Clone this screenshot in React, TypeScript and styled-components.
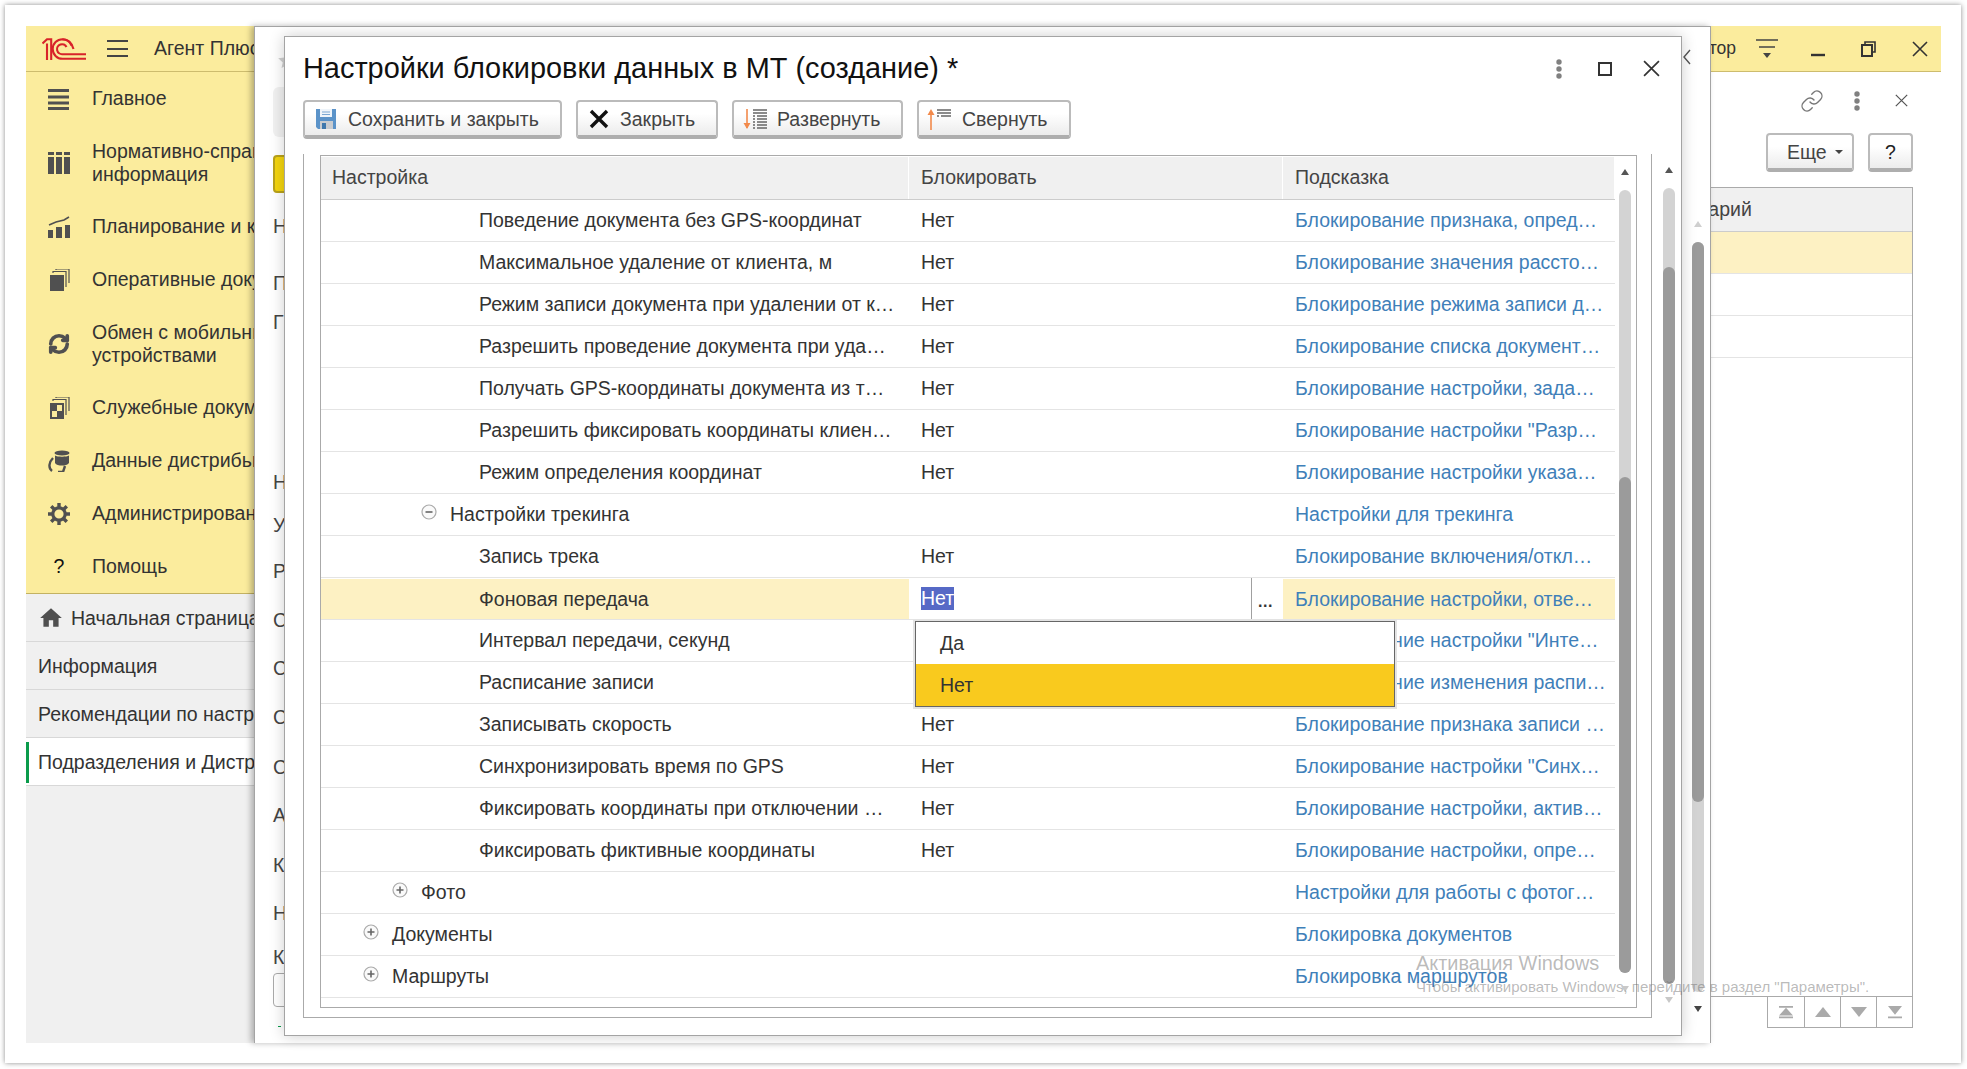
import React from 'react';
import styled, { createGlobalStyle } from 'styled-components';
import { Link as LinkIcon, RefreshCw } from 'lucide-react';

const Global = createGlobalStyle`
  html, body { margin: 0; padding: 0; background: #fff; width: 1967px; height: 1069px; overflow: hidden; }
  * { box-sizing: border-box; }
  body { font-family: "Liberation Sans", Arial, sans-serif; color: #333; }
`;

const FS = '19.5px';

const Card = styled.div`
  position: relative;
  margin: 5px 0 0 5px;
  width: 1956px;
  height: 1058px;
  padding: 21px 20px 20px 21px;
  background: #fff;
  box-shadow: 0 0 5px rgba(0, 0, 0, 0.45);
  font-size: ${FS};
`;
const AppFrame = styled.div`
  width: 1915px;
  height: 1017px;
  display: flex;
  flex-direction: column;
`;
const TopBar = styled.header`
  height: 46px;
  flex: none;
  display: flex;
  align-items: center;
  background: #fbec9d;
  border-bottom: 1px solid #cdbc6e;
`;
const Logo = styled.svg`
  margin-left: 16px;
  width: 44px;
  height: 22px;
  flex: none;
`;
const Burger = styled.div`
  margin-left: 21px;
  width: 21px;
  height: 17px;
  flex: none;
  border-top: 2px solid #444;
  border-bottom: 2px solid #444;
  display: flex;
  align-items: center;
  &::before { content: ''; display: block; width: 100%; height: 2px; background: #444; }
`;
const AppTitle = styled.div`
  margin-left: 26px;
  white-space: nowrap;
`;
const UserName = styled.div`
  margin-left: auto;
  margin-right: 5px;
  white-space: nowrap;
  font-size: 17.5px;
`;
const WinBtn = styled.div<{ $last?: boolean }>`
  width: 51px;
  flex: none;
  display: flex;
  justify-content: center;
  margin-right: ${p => (p.$last ? '-4px' : '0')};
`;
const Work = styled.div`
  flex: 1;
  min-height: 0;
  display: flex;
`;
const Sidebar = styled.nav`
  width: 228px;
  flex: none;
  display: flex;
  flex-direction: column;
  background: #f0f0f0;
  overflow: hidden;
`;
const Menu = styled.div`
  background: #fbec9d;
  border-bottom: 1px solid #c3b262;
`;
const MenuItem = styled.div<{ $double?: boolean }>`
  height: ${p => (p.$double ? 75 : 53)}px;
  display: flex;
  align-items: center;
  padding-left: 22px;
  line-height: 23px;
  white-space: nowrap;
`;
const MenuIcon = styled.svg`
  width: 22px;
  height: 22px;
  flex: none;
  margin-right: 22px;
  color: #505050;
`;
const RefreshWrap = styled.span`
  width: 22px;
  height: 22px;
  flex: none;
  margin-right: 22px;
  color: #505050;
  display: flex;
`;
const Help = styled.span`
  width: 22px;
  flex: none;
  margin-right: 22px;
  text-align: center;
  color: #111;
`;
const Tab = styled.div<{ $active?: boolean }>`
  height: 48px;
  flex: none;
  display: flex;
  align-items: center;
  white-space: nowrap;
  padding-top: 2px;
  padding-left: ${p => (p.$active ? 0 : 12)}px;
  background: ${p => (p.$active ? '#fff' : 'transparent')};
  border-bottom: 1px solid #d8d8d8;
`;
const TabMark = styled.span`
  width: 3px;
  height: 41px;
  flex: none;
  margin-right: 9px;
  background: #0a9b4b;
`;
const HomeIcon = styled.svg`
  width: 26px;
  height: 26px;
  margin: -2px 7px 0 0;
  flex: none;
  color: #505050;
`;
const MainForm = styled.main`
  flex: 1;
  min-width: 0;
  display: flex;
  flex-direction: column;
  padding: 0 28px 0 0;
`;
const FormTools = styled.div`
  height: 61px;
  flex: none;
  display: flex;
  justify-content: flex-end;
  margin-right: -11px;
  padding-top: 6px;
`;
const FormTool = styled.div`
  width: 45px;
  height: 45px;
  display: flex;
  align-items: center;
  justify-content: center;
  color: #777;
`;
const FormButtons = styled.div`
  height: 39px;
  flex: none;
  display: flex;
  justify-content: flex-end;
  gap: 14px;
`;
const ListTable = styled.div`
  margin-top: 15px;
  height: 810px;
  flex: none;
  border: 1px solid #aaa;
`;
const ListHead = styled.div`
  height: 44px;
  background: #f0f0f0;
  border-bottom: 1px solid #ccc;
  display: flex;
  align-items: center;
  padding-left: 1374px;
  color: #444;
`;
const ListRow = styled.div<{ $sel?: boolean }>`
  height: 42px;
  background: ${p => (p.$sel ? '#fdf1c3' : '#fff')};
  border-bottom: 1px solid #e4e4e4;
`;
const Pager = styled.div`
  align-self: flex-end;
  display: flex;
  height: 32px;
  margin-top: -1px;
  border: 1px solid #aaa;
`;
const PagerCell = styled.div`
  width: 36px;
  display: flex;
  align-items: center;
  justify-content: center;
  border-left: 1px solid #aaa;
  padding-bottom: 1px;
  &:first-child { border-left: 0; }
`;
const Button = styled.div<{ $w?: number; $pad?: number }>`
  height: 39px;
  width: ${p => (p.$w ? `${p.$w}px` : 'auto')};
  flex: none;
  display: flex;
  align-items: center;
  padding: 1px 0 0 ${p => p.$pad ?? 11}px;
  border: 2px solid #bbb;
  border-bottom: 4px solid #aeaeae;
  border-radius: 4px;
  background: linear-gradient(#fff 35%, #ececec);
  color: #444;
  white-space: nowrap;
`;
const BtnIcon = styled.svg<{ $w: number; $gap?: number }>`
  width: ${p => p.$w}px;
  height: 22px;
  flex: none;
  margin-right: ${p => p.$gap ?? 10}px;
`;
const Caret = styled.span`
  margin-left: 8px;
  width: 0;
  height: 0;
  border-left: 4px solid transparent;
  border-right: 4px solid transparent;
  border-top: 4px solid #444;
`;
const HelpMark = styled.span`
  width: 100%;
  text-align: center;
  color: #222;
`;
const BackWindow = styled.section`
  position: absolute;
  left: 249px;
  top: 21px;
  width: 1457px;
  height: 1017px;
  display: flex;
  background: #fff;
  border: 1px solid #a4a4a4;
  border-bottom: 0;
  box-shadow: -3px 0 6px rgba(0, 0, 0, 0.28);
  color: #444;
`;
const BackFields = styled.div`
  flex: 1;
  padding: 25px 0 0 18px;
  display: flex;
  flex-direction: column;
`;
const BackStar = styled.svg`
  margin-left: 5px;
  width: 18px;
  height: 16px;
  flex: none;
  color: #cfcfcf;
`;
const BackGrey = styled.div`
  margin-top: 19px;
  width: 40px;
  height: 50px;
  flex: none;
  border-radius: 6px;
  background: #f1f1f1;
`;
const BackYellow = styled.div`
  margin-top: 18px;
  width: 40px;
  height: 38px;
  flex: none;
  border-radius: 4px;
  background: #f4d50e;
  border: 2px solid #b9a21a;
`;
const BackLabel = styled.div<{ $gap: number }>`
  margin-top: ${p => p.$gap}px;
  height: 24px;
  line-height: 24px;
  flex: none;
`;
const BackInput = styled.div`
  margin-top: 4px;
  width: 40px;
  height: 34px;
  flex: none;
  border: 1px solid #aaa;
  border-radius: 4px;
`;
const BackDash = styled.div`
  margin: 19px 0 0 5px;
  width: 3px;
  height: 1px;
  background: #0a9b4b;
`;
const BackRight = styled.div`
  width: 29px;
  flex: none;
  display: flex;
  flex-direction: column;
  align-items: flex-start;
`;
const Chevron = styled.svg`
  margin: 22px 0 0 2px;
  width: 8px;
  height: 16px;
  flex: none;
`;
const Scroll = styled.div<{ $pt: number; $ml?: number }>`
  width: 12px;
  flex: none;
  display: flex;
  flex-direction: column;
  align-items: center;
  padding-top: ${p => p.$pt}px;
  margin-left: ${p => p.$ml ?? 0}px;
`;
const ArrowUp = styled.span<{ $c: string }>`
  width: 0;
  height: 0;
  flex: none;
  border-left: 4.5px solid transparent;
  border-right: 4.5px solid transparent;
  border-bottom: 6px solid ${p => p.$c};
`;
const ArrowDown = styled.span<{ $c: string }>`
  width: 0;
  height: 0;
  flex: none;
  border-left: 4.5px solid transparent;
  border-right: 4.5px solid transparent;
  border-top: 6px solid ${p => p.$c};
`;
const Track = styled.div<{ $top: number; $h: number; $gap: number; $bottom: number }>`
  width: 12px;
  height: ${p => p.$h}px;
  flex: none;
  margin: ${p => p.$gap}px 0 ${p => p.$bottom}px;
  background: #d3d3d3;
  border-radius: 6px;
  padding-top: ${p => p.$top}px;
  display: flex;
`;
const Thumb = styled.div<{ $h: number }>`
  width: 12px;
  height: ${p => p.$h}px;
  background: #9b9b9b;
  border-radius: 6px;
`;
const Dialog = styled.section`
  position: absolute;
  left: 279px;
  top: 31px;
  width: 1398px;
  height: 1000px;
  display: flex;
  flex-direction: column;
  background: #fff;
  border: 1px solid #a4a4a4;
  box-shadow: 0 0 14px rgba(0, 0, 0, 0.2);
`;
const DialogTitleRow = styled.div`
  height: 63px;
  flex: none;
  display: flex;
  align-items: center;
  padding: 0 7px 0 18px;
`;
const DialogTitle = styled.h1`
  margin: 0;
  flex: 1;
  font-size: 28.9px;
  font-weight: 400;
  color: #111;
  white-space: nowrap;
`;
const TitleBtn = styled.div`
  width: 46px;
  display: flex;
  justify-content: center;
  align-items: center;
`;
const Dots = styled.svg`
  width: 8px;
  height: 22px;
  color: #808080;
`;
const MaxBox = styled.span`
  width: 14px;
  height: 14px;
  border: 2px solid #333;
`;
const Toolbar = styled.div`
  height: 39px;
  flex: none;
  padding-left: 18px;
  display: flex;
  gap: 14px;
`;
const DialogBody = styled.div`
  margin-top: 15px;
  padding-left: 18px;
  display: flex;
`;
const GroupFrame = styled.div`
  width: 1349px;
  height: 864px;
  flex: none;
  padding: 1px 14px 9px 16px;
  border: 1px solid #aaa;
  border-top: 0;
`;
const TreeTable = styled.div`
  position: relative;
  height: 853px;
  display: flex;
  border: 1px solid #aaa;
`;
const TreeMain = styled.div`
  width: 1294px;
  flex: none;
`;
const HeadRow = styled.div`
  margin-top: 1px;
  height: 43px;
  display: flex;
  border-bottom: 1px solid #ccc;
`;
const HeadCell = styled.div<{ $w: number; $pad: number }>`
  width: ${p => p.$w}px;
  flex: none;
  display: flex;
  align-items: center;
  background: #f0f0f0;
  border-right: 1px solid #fff;
  padding: 0 0 2px ${p => p.$pad}px;
  color: #444;
`;
const Row = styled.div`
  position: relative;
  height: 42px;
  display: flex;
  border-bottom: 1px solid #e4e4e4;
`;
const Cell = styled.div<{ $w: number; $pad: number; $sel?: boolean; $link?: boolean }>`
  width: ${p => p.$w}px;
  flex: none;
  display: flex;
  align-items: center;
  padding-left: ${p => p.$pad}px;
  white-space: nowrap;
  overflow: hidden;
  background: ${p => (p.$sel ? '#fdf1c3' : 'transparent')};
  color: ${p => (p.$link ? '#3f80b9' : '#333')};
  border-top: ${p => (p.$sel ? '1px solid #fff' : '0')};
`;
const Expander = styled.svg`
  width: 16px;
  height: 16px;
  flex: none;
  margin: -6px 13px 0 -1px;
`;
const EditCell = styled.div`
  width: 374px;
  flex: none;
  display: flex;
  align-items: center;
  padding-left: 12px;
`;
const Selected = styled.span`
  background: #5669c6;
  color: #fff;
  line-height: 23px;
`;
const PickButton = styled.span`
  margin-left: auto;
  width: 32px;
  height: 100%;
  flex: none;
  border-left: 1px solid #a0a0a0;
  display: flex;
  align-items: center;
  justify-content: center;
  color: #333;
  font-weight: 700;
  font-size: 16px;
  letter-spacing: 0.5px;
  padding: 6px 4px 0 0;
`;
const DropDown = styled.div`
  position: absolute;
  left: 594px;
  top: 43px;
  width: 480px;
  height: 86px;
  z-index: 3;
  background: #fff;
  border: 1px solid #666;
  box-shadow: 0 0 0 2px #e3e3e3;
`;
const DropItem = styled.div<{ $on?: boolean }>`
  height: 42px;
  display: flex;
  align-items: center;
  padding-left: 24px;
  background: ${p => (p.$on ? '#f9ca1e' : '#fff')};
`;
const DialogScrollCol = styled.div`
  flex: 1;
  display: flex;
`;
const Watermark = styled.div`
  position: absolute;
  left: 1411px;
  top: 944px;
  z-index: 9;
  pointer-events: none;
  color: rgba(110, 110, 110, 0.48);
`;
const WmTitle = styled.div`
  font-size: 19.9px;
  line-height: 28px;
`;
const WmText = styled.div`
  font-size: 15px;
  line-height: 18px;
  margin-top: 1px;
  white-space: nowrap;
`;

const leaves: [string, string][] = [
  ['Поведение документа без GPS-координат', 'Блокирование признака, опред…'],
  ['Максимальное удаление от клиента, м', 'Блокирование значения рассто…'],
  ['Режим записи документа при удалении от к…', 'Блокирование режима записи д…'],
  ['Разрешить проведение документа при уда…', 'Блокирование списка документ…'],
  ['Получать GPS-координаты документа из т…', 'Блокирование настройки, зада…'],
  ['Разрешить фиксировать координаты клиен…', 'Блокирование настройки "Разр…'],
  ['Режим определения координат', 'Блокирование настройки указа…'],
];
const leaves2: [string, string][] = [
  ['Записывать скорость', 'Блокирование признака записи …'],
  ['Синхронизировать время по GPS', 'Блокирование настройки "Синх…'],
  ['Фиксировать координаты при отключении …', 'Блокирование настройки, актив…'],
  ['Фиксировать фиктивные координаты', 'Блокирование настройки, опре…'],
];

const W1 = 588, W2 = 374, W3 = 332;

const Exp = ({ plus }: { plus?: boolean }) => (
  <Expander viewBox="0 0 16 16">
    <circle cx="8" cy="8" r="7" fill="#fafafa" stroke="#aaa" strokeWidth="1.2" />
    <path d={plus ? 'M4.5 8h7M8 4.5v7' : 'M4.5 8h7'} stroke="#666" strokeWidth="1.6" />
  </Expander>
);

const Leaf = ({ a, b, v = 'Нет' }: { a: string; b: string; v?: string }) => (
  <Row>
    <Cell $w={W1} $pad={158}>{a}</Cell>
    <Cell $w={W2} $pad={12}>{v}</Cell>
    <Cell $w={W3} $pad={12} $link>{b}</Cell>
  </Row>
);
const Branch = ({ a, b, indent, plus }: { a: string; b: string; indent: number; plus?: boolean }) => (
  <Row>
    <Cell $w={W1} $pad={indent}><Exp plus={plus} />{a}</Cell>
    <Cell $w={W2} $pad={12} />
    <Cell $w={W3} $pad={12} $link>{b}</Cell>
  </Row>
);

const XIcon = ({ s, w = 1.6, c = '#333' }: { s: number; w?: number; c?: string }) => (
  <svg width={s} height={s} viewBox="0 0 16 16"><path d="M1 1l14 14M15 1L1 15" stroke={c} strokeWidth={w} fill="none" /></svg>
);
const DotsIcon = () => (
  <Dots viewBox="0 0 8 22"><g fill="currentColor"><circle cx="4" cy="4" r="2.7" /><circle cx="4" cy="11" r="2.7" /><circle cx="4" cy="18" r="2.7" /></g></Dots>
);

const backLetters: [string, number][] = [
  ['Н', 21], ['П', 33], ['Г', 15], ['Н', 136], ['У', 19], ['Р', 22], ['С', 25], ['С', 24], ['С', 25], ['С', 26], ['А', 24], ['К', 26], ['Н', 24], ['К', 20],
];

export default function App() {
  return (
    <>
      <Global />
      <Card>
        <AppFrame>
          <TopBar>
            <Logo viewBox="0 0 44 22" fill="none" stroke="#d8232a" strokeWidth="2.1">
              <path d="M0.5 5.5 L5 1.2 H9.2 V22 M5 5.5 V22" />
              <path d="M29.5 7.5 A10 10 0 0 0 20.5 1.2 A9.8 9.8 0 1 0 20.5 20.8 H44" />
              <path d="M24.5 9 A5 5 0 1 0 20.5 16.2 H44" />
              <path d="M20.5 1.2 C26 1.2 30 5 31.5 11" />
            </Logo>
            <Burger />
            <AppTitle>Агент Плюс</AppTitle>
            <UserName>Администратор</UserName>
            <WinBtn>
              <svg width="22" height="20" viewBox="0 0 22 20"><path d="M0 1h22M3 8h16" stroke="#444" strokeWidth="1.5" /><path d="M7 14h8l-4 5z" fill="#444" /></svg>
            </WinBtn>
            <WinBtn>
              <svg width="14" height="20" viewBox="0 0 14 20"><path d="M0 16h14" stroke="#333" strokeWidth="2.4" /></svg>
            </WinBtn>
            <WinBtn>
              <svg width="15" height="16" viewBox="0 0 15 16" fill="none" stroke="#333" strokeWidth="1.6"><path d="M4 4V1h10v10h-3" /><rect x="1" y="4" width="10" height="11" strokeWidth="2" /></svg>
            </WinBtn>
            <WinBtn $last><XIcon s={16} /></WinBtn>
          </TopBar>
          <Work>
            <Sidebar>
              <Menu>
                <MenuItem>
                  <MenuIcon viewBox="0 0 22 22" fill="currentColor"><rect y="1" width="21" height="3" /><rect y="7.5" width="21" height="3" /><rect y="13.5" width="21" height="3" /><rect y="19" width="21" height="3" /></MenuIcon>
                  Главное
                </MenuItem>
                <MenuItem $double>
                  <MenuIcon viewBox="0 0 22 22" fill="currentColor"><path d="M0 0h6v3H0zM8 0h6v3H8zM16 0h6v3h-6zM0 5h6v17H0zM8 5h6v17H8zM16 5h6v17h-6z" /></MenuIcon>
                  <span>Нормативно-справочная<br />информация</span>
                </MenuItem>
                <MenuItem>
                  <MenuIcon viewBox="0 0 22 22" fill="currentColor"><path d="M0 14h5v8H0zM8 11h6v11H8zM17 9h5v13h-5z" /><path d="M1 9l7-3 8-2 5-3" fill="none" stroke="currentColor" strokeWidth="1.6" /></MenuIcon>
                  Планирование и контроль
                </MenuItem>
                <MenuItem>
                  <MenuIcon viewBox="0 0 22 22" fill="currentColor"><rect x="2" y="6" width="14" height="16" /><path d="M5 4V2.5h13V18M8 1V0h13v14" fill="none" stroke="currentColor" strokeWidth="1.2" /></MenuIcon>
                  Оперативные документы
                </MenuItem>
                <MenuItem $double>
                  <RefreshWrap><RefreshCw size={22} strokeWidth={4} /></RefreshWrap>
                  <span>Обмен с мобильными<br />устройствами</span>
                </MenuItem>
                <MenuItem>
                  <MenuIcon viewBox="0 0 22 22" fill="currentColor"><rect x="2" y="6" width="14" height="16" /><path d="M5 4V2.5h13V18M8 1V0h13v14" fill="none" stroke="currentColor" strokeWidth="1.2" /><path d="M9 8h5v6H9zM4 14h5v6H4z" fill="#fbec9d" /></MenuIcon>
                  Служебные документы
                </MenuItem>
                <MenuItem>
                  <MenuIcon viewBox="0 0 22 22" fill="currentColor"><ellipse cx="14" cy="3" rx="7.5" ry="2.6" /><path d="M7 5.5c2 1.6 12 1.6 14 0V13c-1.5 2-4 2.6-7 2.6S8 15 7 13z" /><path d="M5 8C1 12 0 18 4 21M17 16l-2 6h-5" fill="none" stroke="currentColor" strokeWidth="2.4" /></MenuIcon>
                  Данные дистрибьюторов
                </MenuItem>
                <MenuItem>
                  <MenuIcon viewBox="0 0 22 22" fill="none" stroke="currentColor">
                    <circle cx="11" cy="11" r="6.2" strokeWidth="3.2" />
                    <path d="M11 0v4M11 18v4M0 11h4M18 11h4M3.2 3.2l2.8 2.8M16 16l2.8 2.8M18.8 3.2L16 6M6 16l-2.8 2.8" strokeWidth="3.4" />
                  </MenuIcon>
                  Администрирование
                </MenuItem>
                <MenuItem><Help>?</Help>Помощь</MenuItem>
              </Menu>
              <Tab>
                <HomeIcon viewBox="0 0 24 24" fill="currentColor"><path d="M10 20v-6h4v6h5v-8h3L12 3 2 12h3v8z" /></HomeIcon>
                Начальная страница
              </Tab>
              <Tab>Информация</Tab>
              <Tab>Рекомендации по настройке</Tab>
              <Tab $active><TabMark />Подразделения и Дистрибьюторы</Tab>
            </Sidebar>
            <MainForm>
              <FormTools>
                <FormTool><LinkIcon size={24} strokeWidth={1.4} /></FormTool>
                <FormTool><DotsIcon /></FormTool>
                <FormTool><XIcon s={13} c="#555" w={1.5} /></FormTool>
              </FormTools>
              <FormButtons>
                <Button $w={88} $pad={19}>Еще<Caret /></Button>
                <Button $w={45} $pad={0}><HelpMark>?</HelpMark></Button>
              </FormButtons>
              <ListTable>
                <ListHead>Комментарий</ListHead>
                <ListRow $sel />
                <ListRow />
                <ListRow />
              </ListTable>
              <Pager>
                <PagerCell><svg width="18" height="14" viewBox="0 0 20 16"><path d="M2 1h16v2H2zM10 3l8 9H2zM2 13h16v2H2z" fill="#aaa" /></svg></PagerCell>
                <PagerCell><svg width="16" height="10" viewBox="0 0 16 10"><path d="M8 0l8 10H0z" fill="#aaa" /></svg></PagerCell>
                <PagerCell><svg width="16" height="10" viewBox="0 0 16 10"><path d="M8 10L0 0h16z" fill="#aaa" /></svg></PagerCell>
                <PagerCell><svg width="18" height="14" viewBox="0 0 20 16"><path d="M2 1h16L10 11zM2 13h16v2H2z" fill="#aaa" /></svg></PagerCell>
              </Pager>
            </MainForm>
          </Work>
        </AppFrame>

        <BackWindow>
          <BackFields>
            <BackStar viewBox="0 0 18 16"><path d="M9 0l2.6 5.6 6.2.7-4.6 4.1 1.3 5.6L9 13l-5.5 3 1.3-5.6L.2 6.3l6.2-.7z" fill="currentColor" /></BackStar>
            <BackGrey />
            <BackYellow />
            {backLetters.map(([l, g], i) => <BackLabel key={i} $gap={g}>{l}</BackLabel>)}
            <BackInput />
            <BackDash />
          </BackFields>
          <BackRight>
            <Chevron viewBox="0 0 8 16"><path d="M7 1L1 8l6 7" fill="none" stroke="#555" strokeWidth="1.4" /></Chevron>
            <Scroll $pt={156} $ml={11}>
              <ArrowUp $c="#cfcfcf" />
              <Track $top={0} $h={750} $gap={15} $bottom={14}><Thumb $h={560} /></Track>
              <ArrowDown $c="#444" />
            </Scroll>
          </BackRight>
        </BackWindow>

        <Dialog>
          <DialogTitleRow>
            <DialogTitle>Настройки блокировки данных в МТ (создание) *</DialogTitle>
            <TitleBtn><DotsIcon /></TitleBtn>
            <TitleBtn><MaxBox /></TitleBtn>
            <TitleBtn><XIcon s={17} /></TitleBtn>
          </DialogTitleRow>
          <Toolbar>
            <Button $w={259}>
              <BtnIcon $w={20} $gap={12} viewBox="0 0 20 22">
                <path d="M0 1h20v20H2l-2-2z" fill="#5b93c9" />
                <path d="M4 1h12v8H4z" fill="#eef4fa" />
                <path d="M6 4h8M6 6.5h8" stroke="#7aa7d3" strokeWidth="1" />
                <path d="M4 13h13v8H4z" fill="#c9ccd0" />
                <path d="M6 15h4v6H6z" fill="#3f78ad" />
              </BtnIcon>
              Сохранить и закрыть
            </Button>
            <Button $w={142}>
              <BtnIcon $w={20} $gap={11} viewBox="0 0 20 20"><path d="M2 2l16 16M18 2L2 18" stroke="#111" strokeWidth="3.4" /></BtnIcon>
              Закрыть
            </Button>
            <Button $w={171} $pad={9}>
              <BtnIcon $w={24} viewBox="0 0 24 22">
                <path d="M4 1v19" stroke="#f28a4b" strokeWidth="1.6" /><path d="M0.5 15h7L4 21z" fill="#f28a4b" />
                <path d="M10 2h14M10 5h14M14 8h10M14 11h10M14 14h10M14 17h10M14 20h10" stroke="#666" strokeWidth="1.3" />
                <path d="M10 8h2M10 11h2M10 14h2M10 17h2M10 20h2" stroke="#666" strokeWidth="1.3" />
              </BtnIcon>
              Развернуть
            </Button>
            <Button $w={154} $pad={8}>
              <BtnIcon $w={24} $gap={11} viewBox="0 0 24 22">
                <path d="M4 3v19" stroke="#f28a4b" strokeWidth="1.6" /><path d="M0.5 7h7L4 1z" fill="#f28a4b" />
                <path d="M10 2h14M10 5h14M14 8h10M10 8h2" stroke="#666" strokeWidth="1.6" />
              </BtnIcon>
              Свернуть
            </Button>
          </Toolbar>
          <DialogBody>
            <GroupFrame>
              <TreeTable>
                <TreeMain>
                  <HeadRow>
                    <HeadCell $w={W1} $pad={11}>Настройка</HeadCell>
                    <HeadCell $w={W2} $pad={12}>Блокировать</HeadCell>
                    <HeadCell $w={W3} $pad={12}>Подсказка</HeadCell>
                  </HeadRow>
                  {leaves.map(([a, b]) => <Leaf key={a} a={a} b={b} />)}
                  <Branch a="Настройки трекинга" b="Настройки для трекинга" indent={101} />
                  <Leaf a="Запись трека" b="Блокирование включения/откл…" />
                  <Row>
                    <Cell $w={W1} $pad={158} $sel>Фоновая передача</Cell>
                    <EditCell><Selected>Нет</Selected><PickButton>...</PickButton></EditCell>
                    <Cell $w={W3} $pad={12} $sel $link>Блокирование настройки, отве…</Cell>
                    <DropDown>
                      <DropItem>Да</DropItem>
                      <DropItem $on>Нет</DropItem>
                    </DropDown>
                  </Row>
                  <Leaf a="Интервал передачи, секунд" v="" b="Блокирование настройки &quot;Инте…" />
                  <Leaf a="Расписание записи" v="" b="Блокирование изменения распи…" />
                  {leaves2.map(([a, b]) => <Leaf key={a} a={a} b={b} />)}
                  <Branch a="Фото" b="Настройки для работы с фотог…" indent={72} plus />
                  <Branch a="Документы" b="Блокировка документов" indent={43} plus />
                  <Branch a="Маршруты" b="Блокировка маршрутов" indent={43} plus />
                </TreeMain>
                <Scroll $pt={13} $ml={4}>
                  <ArrowUp $c="#555" />
                  <Track $top={287} $h={783} $gap={15} $bottom={13}><Thumb $h={496} /></Track>
                  <ArrowDown $c="#c8c8c8" />
                </Scroll>
              </TreeTable>
            </GroupFrame>
            <DialogScrollCol>
              <Scroll $pt={13} $ml={11}>
                <ArrowUp $c="#555" />
                <Track $top={79} $h={796} $gap={15} $bottom={13}><Thumb $h={717} /></Track>
                <ArrowDown $c="#c8c8c8" />
              </Scroll>
            </DialogScrollCol>
          </DialogBody>
        </Dialog>

        <Watermark>
          <WmTitle>Активация Windows</WmTitle>
          <WmText>Чтобы активировать Windows, перейдите в раздел "Параметры".</WmText>
        </Watermark>
      </Card>
    </>
  );
}
